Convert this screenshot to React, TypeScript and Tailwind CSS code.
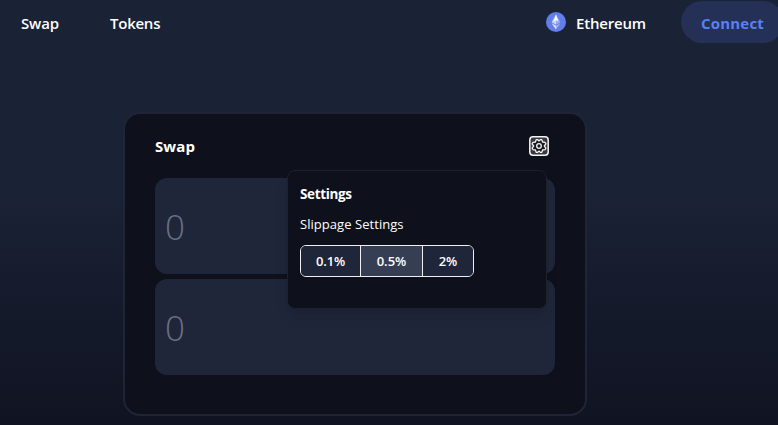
function EthereumLogo() {
  return (
    <svg width="20" height="20" viewBox="0 0 20 20" className="block">
      <circle cx="10" cy="10" r="10" fill="#627eea" />
      <path d="M10 2.6 5.6 10.2 10 12.8Z" fill="#c9d3f8" />
      <path d="M10 2.6v10.2l4.4-2.6Z" fill="#98abf1" />
      <path d="M10 2.6 7.6 9.2 10 8.2l2.4 1Z" fill="#ffffff" />
      <path d="M5.6 11.2 10 17.4v-3.6Z" fill="#dfe5fb" />
      <path d="M14.4 11.2 10 17.4v-3.6Z" fill="#a5b5f2" />
    </svg>
  );
}

function SettingsIcon() {
  return (
    <svg width="20" height="20" viewBox="0 0 20 20" fill="none" className="block">
      <rect x="0.8" y="0.8" width="18.4" height="18.4" rx="3.2" fill="#393a3f" stroke="#f4f4f5" strokeWidth="1.5" />
      <path
        d="M7.2 3.7h1.5l1.3 1.2 1.3-1.2h1.5l.8 2.3 2.4.3.9 1.6-1.6 2.1 1.6 2.1-.9 1.6-2.4.3-.8 2.3h-1.5L10 15.1l-1.3 1.2H7.2L6.4 14 4 13.7l-.9-1.6L4.7 10 3.1 7.9 4 6.3 6.4 6Z"
        fill="#17191f"
        stroke="#f4f4f5"
        strokeWidth="1.3"
        strokeLinejoin="round"
      />
      <circle cx="10" cy="10" r="2.3" stroke="#f4f4f5" strokeWidth="1.3" />
    </svg>
  );
}

function AmountInput() {
  return (
    <div className="flex h-24 items-center rounded-xl bg-[#1f2639] pl-[10px] pt-px text-[35px] leading-none text-[#697084]">
      <span className="font-['Open_Sans',sans-serif] font-[350]">0</span>
    </div>
  );
}

export default function App() {
  return (
    <div className="h-[425px] w-[778px] overflow-hidden bg-linear-to-b from-[#1a2235] from-[45%] to-[#101322] font-['Open_Sans','Noto_Sans',sans-serif] text-white">
      <header className="flex h-[46px] items-center justify-between pl-[21px]">
        <nav className="flex gap-[50px] text-[15px] font-semibold leading-5">
          <span className="w-[39px] whitespace-nowrap tracking-[-0.15px]">Swap</span>
          <span className="whitespace-nowrap tracking-[-0.25px]">Tokens</span>
        </nav>
        <div className="flex items-center">
          <span className="-mt-[2px]">
            <EthereumLogo />
          </span>
          <span className="ml-[10px] w-[70px] whitespace-nowrap text-[15px] font-semibold leading-5 tracking-[-0.2px]">Ethereum</span>
          <button className="-mr-[6px] -mt-[2px] ml-[35px] h-[42px] w-[103px] shrink-0 rounded-full bg-[#243056] pt-[2px] text-[15px] font-bold tracking-[0.2px] text-[#5981f3]">
            Connect
          </button>
        </div>
      </header>
      <main className="mx-auto mt-[66px] h-[304px] w-[464px] -translate-x-[34px] rounded-[17px] border-2 border-[#1f2436] bg-[#0e111b] px-[30px]">
        <div className="flex h-16 items-center justify-between pr-[6px]">
          <h1 className="text-[15px] font-bold tracking-[0.1px]">Swap</h1>
          <SettingsIcon />
        </div>
        <div className="relative flex flex-col gap-[5px]">
          <AmountInput />
          <AmountInput />
          <section className="absolute -top-2 right-2 h-[139px] w-[260px] rounded-lg border border-[#1c212e] bg-[#0e111b] pl-3 pt-[13px] shadow-lg">
            <h2 className="text-[13.5px] font-bold leading-5 tracking-[-0.35px]">Settings</h2>
            <p className="mt-[10px] text-[13px] leading-5 tracking-[0.05px]">Slippage Settings</p>
            <div className="mt-[11px] flex h-8 w-[174px] overflow-hidden rounded-md border border-[#f0f0f2] text-[13px] font-semibold">
              <span className="flex w-[60px] items-center justify-center border-r border-[#f0f0f2] bg-[#1f2639] pt-px tracking-[-0.2px]">0.1%</span>
              <span className="flex w-[62px] items-center justify-center border-r border-[#f0f0f2] bg-[#363e53] pt-px">0.5%</span>
              <span className="flex flex-1 items-center justify-center bg-[#1f2639] pt-px">2%</span>
            </div>
          </section>
        </div>
      </main>
    </div>
  );
}
